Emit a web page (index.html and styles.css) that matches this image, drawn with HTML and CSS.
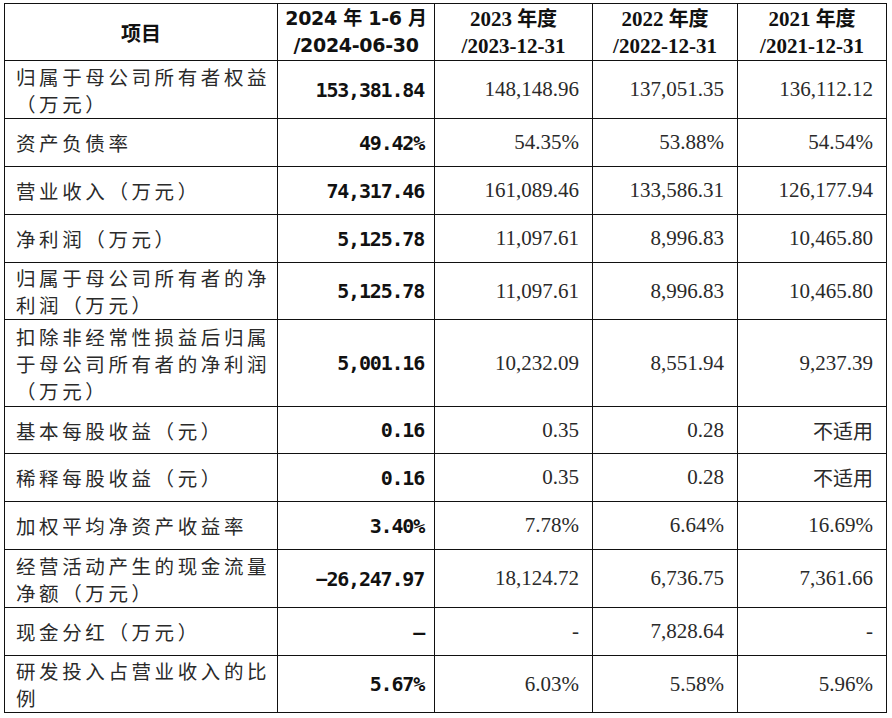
FILE: index.html
```html
<!DOCTYPE html>
<html lang="zh">
<head>
<meta charset="utf-8">
<link rel="stylesheet" href="styles.css">
</head>
<body>
<table class="fin">
  <colgroup>
    <col class="c1"><col class="c2"><col class="c3"><col class="c4"><col class="c5">
  </colgroup>
  <thead>
    <tr class="h57">
      <th class="item">项目</th>
      <th class="hsans">2024 年 1-6 月<br>/2024-06-30</th>
      <th class="hserif">2023 <span class="cjk">年度</span><br>/2023-12-31</th>
      <th class="hserif">2022 <span class="cjk">年度</span><br>/2022-12-31</th>
      <th class="hserif">2021 <span class="cjk">年度</span><br>/2021-12-31</th>
    </tr>
  </thead>
  <tbody>
    <tr class="h58"><td class="lbl">归属于母公司所有者权益<br>（万元）</td><td class="b">153,381.84</td><td class="n">148,148.96</td><td class="n">137,051.35</td><td class="n">136,112.12</td></tr>
    <tr class="h48"><td class="lbl">资产负债率</td><td class="b">49.42%</td><td class="n">54.35%</td><td class="n">53.88%</td><td class="n">54.54%</td></tr>
    <tr class="h48"><td class="lbl">营业收入（万元）</td><td class="b">74,317.46</td><td class="n">161,089.46</td><td class="n">133,586.31</td><td class="n">126,177.94</td></tr>
    <tr class="h48"><td class="lbl">净利润（万元）</td><td class="b">5,125.78</td><td class="n">11,097.61</td><td class="n">8,996.83</td><td class="n">10,465.80</td></tr>
    <tr class="h57"><td class="lbl">归属于母公司所有者的净<br>利润（万元）</td><td class="b">5,125.78</td><td class="n">11,097.61</td><td class="n">8,996.83</td><td class="n">10,465.80</td></tr>
    <tr class="h87"><td class="lbl">扣除非经常性损益后归属<br>于母公司所有者的净利润<br>（万元）</td><td class="b">5,001.16</td><td class="n">10,232.09</td><td class="n">8,551.94</td><td class="n">9,237.39</td></tr>
    <tr class="h47"><td class="lbl">基本每股收益（元）</td><td class="b">0.16</td><td class="n">0.35</td><td class="n">0.28</td><td class="n cjkn">不适用</td></tr>
    <tr class="h48"><td class="lbl">稀释每股收益（元）</td><td class="b">0.16</td><td class="n">0.35</td><td class="n">0.28</td><td class="n cjkn">不适用</td></tr>
    <tr class="h48"><td class="lbl">加权平均净资产收益率</td><td class="b">3.40%</td><td class="n">7.78%</td><td class="n">6.64%</td><td class="n">16.69%</td></tr>
    <tr class="h58"><td class="lbl">经营活动产生的现金流量<br>净额（万元）</td><td class="b">−26,247.97</td><td class="n">18,124.72</td><td class="n">6,736.75</td><td class="n">7,361.66</td></tr>
    <tr class="h48"><td class="lbl">现金分红（万元）</td><td class="b">–</td><td class="n">-</td><td class="n">7,828.64</td><td class="n">-</td></tr>
    <tr class="h57"><td class="lbl">研发投入占营业收入的比<br>例</td><td class="b">5.67%</td><td class="n">6.03%</td><td class="n">5.58%</td><td class="n">5.96%</td></tr>
  </tbody>
</table>
<p class="note">数据来源：公司招股说明书</p>
</body>
</html>
```

FILE: styles.css
```css
html, body {
  margin: 0;
  padding: 0;
  background: #ffffff;
}

.fin {
  border-collapse: collapse;
  table-layout: fixed;
  margin: 3px 0 0 4px;
  width: 882px;
}

.c1 { width: 273px; }
.c2 { width: 157px; }
.c3 { width: 158px; }
.c4 { width: 145px; }
.c5 { width: 149px; }

.fin th,
.fin td {
  border: 1px solid #111;
  padding: 0;
  vertical-align: middle;
}

.h47 { height: 47px; }
.h48 { height: 48px; }
.h57 { height: 57px; }
.h58 { height: 58px; }
.h87 { height: 87px; }

.fin th {
  color: #111;
  font-weight: bold;
  text-align: center;
  line-height: 27px;
}

.fin .item {
  font-family: "Noto Sans CJK SC", sans-serif;
  font-size: 20px;
  font-weight: 700;
}

.fin .hsans {
  font-family: "DejaVu Sans", "Noto Sans CJK SC", sans-serif;
  font-size: 19px;
  font-weight: 700;
  letter-spacing: -0.3px;
}

.fin .hserif {
  font-family: "Liberation Serif", "Noto Sans CJK SC", serif;
  font-size: 21px;
  font-weight: 700;
}

.hserif .cjk {
  font-family: "Noto Sans CJK SC", sans-serif;
  font-size: 20px;
}

.fin .lbl {
  font-family: "Noto Sans CJK SC", sans-serif;
  font-size: 19.5px;
  font-weight: 400;
  color: #2a2a2a;
  letter-spacing: 3.6px;
  line-height: 27px;
  padding-left: 11px;
  text-align: left;
  white-space: nowrap;
}

.fin .b {
  font-family: "DejaVu Sans Mono", monospace;
  font-size: 20px;
  font-weight: 700;
  color: #111;
  text-align: right;
  padding-right: 10px;
  letter-spacing: -1.2px;
}

.fin .n {
  font-family: "Liberation Serif", serif;
  font-size: 21px;
  color: #2a2a2a;
  text-align: right;
  padding-right: 13px;
}

.fin .cjkn {
  font-family: "Noto Sans CJK SC", sans-serif;
  font-size: 20px;
}

.note {
  margin: 2px 0 0 14px;
  font-family: "Noto Sans CJK SC", sans-serif;
  font-size: 19px;
  color: #2a2a2a;
  letter-spacing: 3px;
}
```
